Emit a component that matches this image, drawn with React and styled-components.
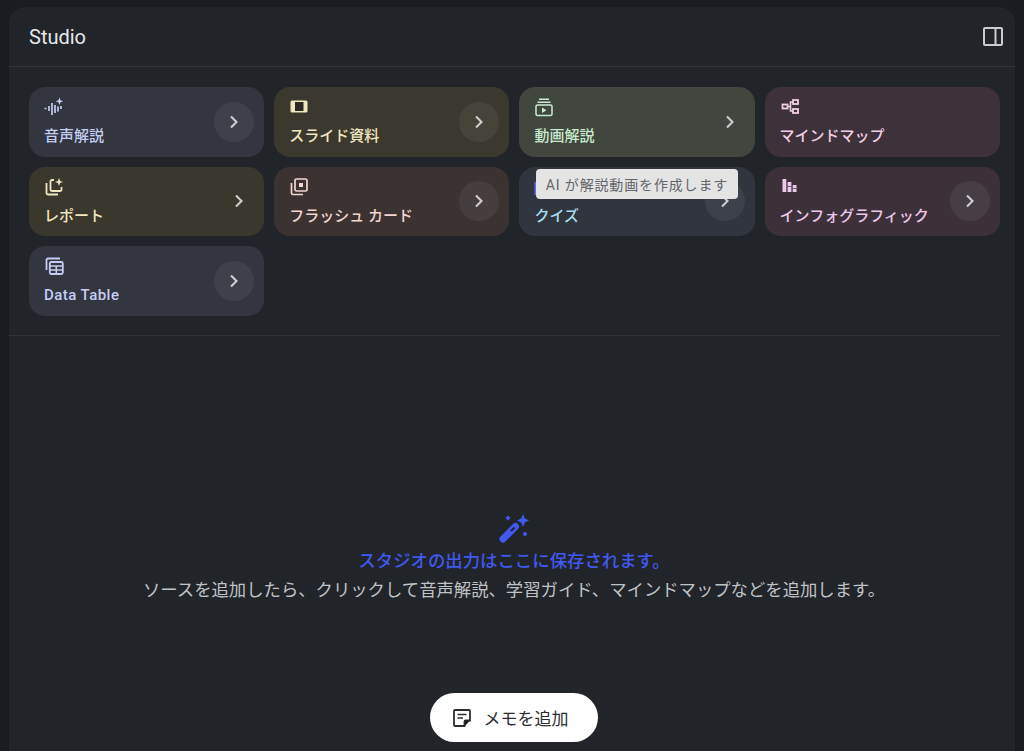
import React from "react";
import styled, { createGlobalStyle } from "styled-components";

const Global = createGlobalStyle`
  html, body { margin: 0; padding: 0; background: #1a1c21; height: 100%; overflow: hidden; }
  #root { height: 100%; }
  * { box-sizing: border-box; }
  body { font-family: Roboto, "Noto Sans CJK JP", "Noto Sans", sans-serif; }
`;

const Page = styled.div`
  height: 751px;
  padding: 7px 9px 0;
  background: #1a1c21;
`;

const Panel = styled.section`
  position: relative;
  height: 744px;
  background: #212429;
  border-radius: 16px 16px 0 0;
  display: flex;
  flex-direction: column;
`;

const Header = styled.header`
  height: 60px;
  flex: none;
  display: flex;
  align-items: center;
  justify-content: space-between;
  padding: 0 12px 0 20px;
  border-bottom: 1px solid #31343a;
`;

const Title = styled.h2`
  margin: 0;
  font-size: 20px;
  font-weight: 400;
  color: #e6e8ea;
`;

const ToggleIcon = styled.svg`
  width: 20px;
  height: 20px;
  display: block;
`;

const Grid = styled.div`
  display: grid;
  grid-template-columns: repeat(4, 1fr);
  grid-auto-rows: 69.6px;
  gap: 10px;
  padding: 20px 15.2px 19px 20px;
`;

const Divider = styled.hr`
  margin: 0 15px 0 0;
  border: 0;
  border-top: 1px solid #2f3238;
`;

const Card = styled.div`
  position: relative;
  display: flex;
  align-items: stretch;
  justify-content: space-between;
  border-radius: 16px;
  background: ${(p) => p.$bg};
  color: ${(p) => p.$fg};
  padding: 0 10px 0 15px;
`;

const CardBody = styled.div`
  display: flex;
  flex-direction: column;
  padding-top: 10px;
`;

const CardIcon = styled.svg`
  width: 20px;
  height: 20px;
  display: block;
`;

const CardLabel = styled.div`
  margin-top: 9px;
  font-size: 15px;
  line-height: 20px;
  font-weight: 500;
  white-space: nowrap;
  letter-spacing: ${(p) => (p.$latin ? "0.45px" : "0")};
`;

const Arrow = styled.div`
  width: 40px;
  height: 40px;
  border-radius: 50%;
  align-self: center;
  display: flex;
  align-items: center;
  justify-content: center;
  margin-right: ${(p) => (p.$plain ? "-5px" : "0")};
  background: ${(p) => (p.$plain ? "transparent" : "rgba(255,255,255,0.06)")};
`;

const Chevron = styled.svg`
  width: 12px;
  height: 14px;
  display: block;
`;

const Tooltip = styled.div`
  position: absolute;
  left: 16.6px;
  top: 2px;
  width: 202px;
  height: 30px;
  border-radius: 4px;
  background: #e4e4e4;
  color: #63666a;
  font-size: 14px;
  letter-spacing: 0.85px;
  font-weight: 400;
  display: flex;
  align-items: center;
  justify-content: center;
  white-space: nowrap;
  z-index: 2;
`;

const Empty = styled.div`
  display: flex;
  flex-direction: column;
  align-items: center;
  padding: 178px 2px 0 6px;
`;

const Wand = styled.svg`
  width: 30px;
  height: 30px;
  display: block;
`;

const EmptyTitle = styled.div`
  margin-top: 5px;
  color: #4059f0;
  font-size: 17.4px;
  line-height: 24px;
  font-weight: 500;
`;

const EmptyText = styled.div`
  margin-top: 5px;
  color: #c0c3c6;
  font-size: 17.35px;
  line-height: 24px;
  white-space: nowrap;
`;

const AddNote = styled.button`
  position: absolute;
  left: 421px;
  bottom: 9px;
  width: 168px;
  height: 49px;
  border: 0;
  border-radius: 25px;
  padding: 0 8px 0 0;
  background: #ffffff;
  color: #2b2d31;
  font: inherit;
  font-size: 17px;
  display: flex;
  align-items: center;
  justify-content: center;
  gap: 12px;
`;

const NoteIcon = styled.svg`
  width: 20px;
  height: 20px;
  display: block;
`;

const icons = {
  audio: (
    <>
      <path d="M0.5 11.5h2M5 9v5M8 6v12M11 8v8M14 9.5v5M17 9v3" stroke="currentColor" strokeWidth="1.7" fill="none" />
      <path d="M15.5 0.5l1 2.8 2.8 1-2.8 1-1 2.8-1-2.8-2.8-1 2.8-1z" fill="currentColor" />
    </>
  ),
  slide: (
    <>
      <rect x="1.5" y="3.5" width="17" height="12" rx="1.5" fill="currentColor" />
      <rect x="6" y="5" width="8.5" height="9" fill="#2a2a22" />
    </>
  ),
  video: (
    <>
      <path d="M5 2.2h10M3.5 5.2h13" stroke="currentColor" strokeWidth="1.5" fill="none" />
      <rect x="2" y="8" width="16" height="10.5" rx="1.5" stroke="currentColor" strokeWidth="1.5" fill="none" />
      <path d="M8 10.5l4.5 2.7L8 16z" fill="currentColor" />
    </>
  ),
  mind: (
    <>
      <rect x="2.5" y="7.5" width="5" height="4" stroke="currentColor" strokeWidth="1.8" fill="none" />
      <rect x="13" y="3" width="5" height="4" stroke="currentColor" strokeWidth="1.8" fill="none" />
      <rect x="13" y="12" width="5" height="4" stroke="currentColor" strokeWidth="1.8" fill="none" />
      <path d="M7.5 9.5h3M13 5h-2.5v9H13" stroke="currentColor" strokeWidth="1.6" fill="none" />
    </>
  ),
  report: (
    <>
      <path d="M10 3H8a1.5 1.5 0 0 0-1.5 1.5v8A1.5 1.5 0 0 0 8 14h8a1.5 1.5 0 0 0 1.5-1.5V10" stroke="currentColor" strokeWidth="1.8" fill="none" />
      <path d="M2.5 6v10a1.5 1.5 0 0 0 1.5 1.5h10" stroke="currentColor" strokeWidth="1.8" fill="none" />
      <path d="M15 1l1.1 2.9L19 5l-2.9 1.1L15 9l-1.1-2.9L11 5l2.9-1.1z" fill="currentColor" />
    </>
  ),
  flash: (
    <>
      <rect x="6" y="2" width="12" height="12" rx="1.5" stroke="currentColor" strokeWidth="1.7" fill="none" />
      <path d="M2.5 6v10A1.5 1.5 0 0 0 4 17.5h10" stroke="currentColor" strokeWidth="1.7" fill="none" />
      <rect x="10" y="6" width="4" height="4" fill="currentColor" />
    </>
  ),
  quiz: <rect x="0.4" y="5" width="1.6" height="13" fill="#5a6ad8" />,
  infographic: (
    <>
      <rect x="2.5" y="2" width="3.8" height="13" fill="currentColor" />
      <rect x="7.6" y="5" width="3.8" height="10" fill="currentColor" />
      <rect x="12.7" y="8" width="3.8" height="7" fill="currentColor" />
      <path d="M7.6 9.5h3.8M12.7 11.5h3.8" stroke="#3c3139" strokeWidth="0.7" />
    </>
  ),
  table: (
    <>
      <path d="M2.5 14V4A1.5 1.5 0 0 1 4 2.5h12" stroke="currentColor" strokeWidth="1.8" fill="none" />
      <rect x="5.8" y="6" width="13" height="12" rx="1.5" stroke="currentColor" strokeWidth="1.8" fill="none" />
      <path d="M5.8 10h13M5.8 14h13M12.3 10v8" stroke="currentColor" strokeWidth="1.6" fill="none" />
    </>
  ),
};

const cards = [
  { label: "音声解説", icon: "audio", bg: "#33353f", fg: "#c6cdf4" },
  { label: "スライド資料", icon: "slide", bg: "#3b392d", fg: "#f0e6c0" },
  { label: "動画解説", icon: "video", bg: "#41463f", fg: "#c8ebcf", plain: true },
  { label: "マインドマップ", icon: "mind", bg: "#3d3239", fg: "#f1cfe2", none: true },
  { label: "レポート", icon: "report", bg: "#3a382c", fg: "#f0e6c0", plain: true },
  { label: "フラッシュ カード", icon: "flash", bg: "#3b3232", fg: "#f3d6cf" },
  { label: "クイズ", icon: "quiz", bg: "#31363e", fg: "#a6def0", tooltip: "AI が解説動画を作成します" },
  { label: "インフォグラフィック", icon: "infographic", bg: "#3c3139", fg: "#ecc8ea" },
  { label: "Data Table", icon: "table", bg: "#33353f", fg: "#c6cdf4", latin: true },
];

export default function App() {
  return (
    <>
      <Global />
      <Page>
        <Panel>
          <Header>
            <Title>Studio</Title>
            <ToggleIcon viewBox="0 0 20 20">
              <rect x="1" y="1" width="18" height="17" rx="1" fill="none" stroke="#c9cdcf" strokeWidth="2" />
              <path d="M12.5 1v17" stroke="#c9cdcf" strokeWidth="2" />
            </ToggleIcon>
          </Header>
          <Grid>
            {cards.map((c) => (
              <Card key={c.label} $bg={c.bg} $fg={c.fg}>
                <CardBody>
                  <CardIcon viewBox="0 0 20 20">{icons[c.icon]}</CardIcon>
                  <CardLabel $latin={c.latin}>{c.label}</CardLabel>
                </CardBody>
                {!c.none && (
                  <Arrow $plain={c.plain}>
                    <Chevron viewBox="0 0 12 14">
                      <path d="M3 1.5L8.5 7 3 12.5" fill="none" stroke="#ccd0d4" strokeWidth="2.1" />
                    </Chevron>
                  </Arrow>
                )}
                {c.tooltip && <Tooltip>{c.tooltip}</Tooltip>}
              </Card>
            ))}
          </Grid>
          <Divider />
          <Empty>
            <Wand viewBox="0 0 30 30">
              <path d="M4 25L16.5 12.5" stroke="#4059f0" strokeWidth="7" strokeLinecap="round" fill="none" />
              <path d="M12 17L15.5 13.5" stroke="#212429" strokeWidth="2.2" fill="none" />
              <path d="M24 0l1.9 4.6L30 6.5l-4.1 1.9L24 13l-1.9-4.6L18 6.5l4.1-1.9z" fill="#4059f0" />
              <path d="M9 1.5L11.5 4 9 6.5 6.5 4zM26 17.5l2.5 2.5-2.5 2.5-2.5-2.5z" fill="#4059f0" />
            </Wand>
            <EmptyTitle>スタジオの出力はここに保存されます。</EmptyTitle>
            <EmptyText>ソースを追加したら、クリックして音声解説、学習ガイド、マインドマップなどを追加します。</EmptyText>
          </Empty>
          <AddNote>
            <NoteIcon viewBox="0 0 20 20">
              <path d="M2 17V3a1 1 0 0 1 1-1h14a1 1 0 0 1 1 1v9.5H13.5a1 1 0 0 0-1 1V18H3a1 1 0 0 1-1-1z" fill="none" stroke="#2b2d31" strokeWidth="1.8" />
              <path d="M13 18l5-5.5h-5z" fill="#1c1d20" />
              <path d="M5.5 6.5h9M5.5 10h5.5" stroke="#2b2d31" strokeWidth="1.7" />
            </NoteIcon>
            メモを追加
          </AddNote>
        </Panel>
      </Page>
    </>
  );
}
